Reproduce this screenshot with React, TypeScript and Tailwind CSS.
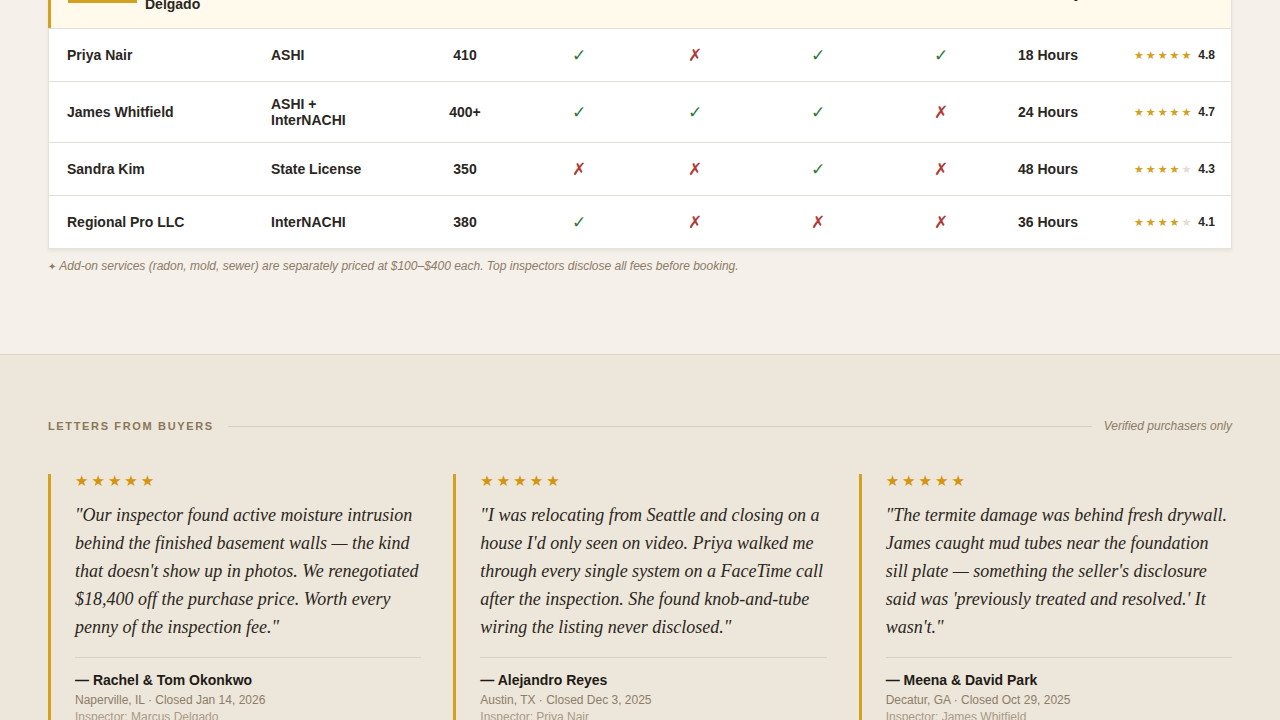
import React from 'react';

type Mark = boolean;

interface Inspector {
  name: string;
  cert: string;
  count: string;
  marks: Mark[];
  turnaround: string;
  rating: number;
  stars: number;
}

const inspectors: Inspector[] = [
  { name: 'Priya Nair', cert: 'ASHI', count: '410', marks: [true, false, true, true], turnaround: '18 Hours', rating: 4.8, stars: 5 },
  { name: 'James Whitfield', cert: 'ASHI + InterNACHI', count: '400+', marks: [true, true, true, false], turnaround: '24 Hours', rating: 4.7, stars: 5 },
  { name: 'Sandra Kim', cert: 'State License', count: '350', marks: [false, false, true, false], turnaround: '48 Hours', rating: 4.3, stars: 4 },
  { name: 'Regional Pro LLC', cert: 'InterNACHI', count: '380', marks: [true, false, false, false], turnaround: '36 Hours', rating: 4.1, stars: 4 },
];

const letters = [
  {
    quote:
      '"Our inspector found active moisture intrusion behind the finished basement walls — the kind that doesn\'t show up in photos. We renegotiated $18,400 off the purchase price. Worth every penny of the inspection fee."',
    name: '— Rachel & Tom Okonkwo',
    meta: 'Naperville, IL · Closed Jan 14, 2026',
    inspector: 'Inspector: Marcus Delgado',
  },
  {
    quote:
      '"I was relocating from Seattle and closing on a house I\'d only seen on video. Priya walked me through every single system on a FaceTime call after the inspection. She found knob-and-tube wiring the listing never disclosed."',
    name: '— Alejandro Reyes',
    meta: 'Austin, TX · Closed Dec 3, 2025',
    inspector: 'Inspector: Priya Nair',
  },
  {
    quote:
      '"The termite damage was behind fresh drywall. James caught mud tubes near the foundation sill plate — something the seller\'s disclosure said was \'previously treated and resolved.\' It wasn\'t."',
    name: '— Meena & David Park',
    meta: 'Decatur, GA · Closed Oct 29, 2025',
    inspector: 'Inspector: James Whitfield',
  },
];

const grid = 'grid grid-cols-[204px_150px_124px_104px_128px_118px_128px_86px_140px]';

function MarkCell({ ok }: { ok: Mark }) {
  return (
    <div className="flex items-center justify-center">
      {ok ? (
        <span className="font-['DejaVu_Sans',sans-serif] text-[17px] leading-6 font-bold text-[#2f7a3a]">✓</span>
      ) : (
        <span className="font-['DejaVu_Sans',sans-serif] text-[17px] leading-6 font-bold text-[#b03a34]">✗</span>
      )}
    </div>
  );
}

function RatingStars({ filled, value }: { filled: number; value: number }) {
  return (
    <div className="flex items-center justify-end pr-4">
      <div className="flex gap-[2px] font-['DejaVu_Sans',sans-serif] text-[11px] leading-none">
        {[0, 1, 2, 3, 4].map((i) => (
          <span key={i} className={i < filled ? 'text-[#d4a020]' : 'text-[#e2ddd5]'}>★</span>
        ))}
      </div>
      <span className="ml-[7px] text-[12px] font-bold text-[#2a2622]">{value.toFixed(1)}</span>
    </div>
  );
}

export default function App() {
  return (
    <div className="min-h-[720px] font-['Liberation_Sans',Arial,sans-serif] text-[#2a2622] bg-[#ede6da]">
      {/* comparison table (scrolled) */}
      <section className="bg-[#f5f0ea] px-12 pb-[79px]">
        <div className="-mt-[68px] bg-white border border-[#e6e1d9] shadow-[0_2px_3px_rgba(60,45,20,0.08)]">
          {/* highlighted row */}
          <div className={`${grid} h-[96px] bg-[#fffaec] border-b border-[#e4dfd6]`}>
            <div className="self-end flex items-end gap-2 pl-[17px] pb-[16px] border-l-[3px] border-[#d4a020] -ml-px">
              <div className="mb-[9px] h-[20px] w-[69px] shrink-0 bg-[#d4a020] text-white text-[9px] font-bold tracking-wider flex items-center justify-center">
                TOP PICK
              </div>
              <p className="text-[14px] font-bold leading-4 w-[90px]">Marcus Delgado</p>
            </div>
            <div className="self-center pl-[18px] text-[14px] font-bold">ASHI</div>
            <div className="self-center text-center text-[14px] font-bold">520</div>
            <div className="self-center"><MarkCell ok={true} /></div>
            <div className="self-center"><MarkCell ok={true} /></div>
            <div className="self-center"><MarkCell ok={true} /></div>
            <div className="self-center"><MarkCell ok={true} /></div>
            <div className="self-end pb-[27px] text-center text-[14px] font-bold leading-4">Same Day</div>
            <div className="self-center"><RatingStars filled={5} value={4.9} /></div>
          </div>

          {inspectors.map((row, idx) => (
            <div
              key={row.name}
              className={`${grid} items-center py-[14px] ${idx < inspectors.length - 1 ? 'border-b border-[#e4dfd6]' : ''}`}
            >
              <div className="pl-[18px] text-[14px] font-bold leading-4">{row.name}</div>
              <div className="px-[18px] text-[14px] font-bold leading-4">{row.cert}</div>
              <div className="text-center text-[14px] font-bold">{row.count}</div>
              {row.marks.map((m, i) => (
                <MarkCell key={i} ok={m} />
              ))}
              <div className="text-center text-[14px] font-bold">{row.turnaround}</div>
              <RatingStars filled={row.stars} value={row.rating} />
            </div>
          ))}
        </div>
        <p className="mt-[8px] text-[12px] italic text-[#8c7b66]">
          <span className="not-italic font-['DejaVu_Sans',sans-serif] text-[10px]">✦</span> Add-on services (radon, mold, sewer) are separately priced at $100–$400 each. Top inspectors disclose all fees before booking.
        </p>
      </section>

      {/* letters */}
      <section className="border-t border-[#ddd4c5] bg-[#ede6da] px-12 pt-[62px] pb-10">
        <div className="flex items-center">
          <h2 className="text-[11px] font-bold uppercase tracking-[0.15em] text-[#8a7659]">Letters from Buyers</h2>
          <div className="ml-[14px] mr-3 h-px flex-1 bg-[#d5ccbd]" />
          <span className="text-[12px] italic text-[#8c7b66]">Verified purchasers only</span>
        </div>

        <div className="mt-[39px] grid grid-cols-3 gap-8">
          {letters.map((l) => (
            <article key={l.name} className="border-l-[3px] border-[#d4a020] pl-6">
              <div className="flex gap-[3px] font-['DejaVu_Sans',sans-serif] text-[15px] leading-[15px] text-[#d4940e]">
                <span>★</span><span>★</span><span>★</span><span>★</span><span>★</span>
              </div>
              <blockquote className="mt-[12px] font-['Liberation_Serif','Times_New_Roman',serif] italic text-[18px] leading-[28px] text-[#2b2621]">
                {l.quote}
              </blockquote>
              <div className="mt-4 border-t border-[#d9d1c3] pt-[14px]">
                <p className="text-[14px] font-bold leading-[17px] text-[#1f1b17]">{l.name}</p>
                <p className="mt-[4px] text-[12px] leading-[14px] text-[#8c7d69]">{l.meta}</p>
                <p className="mt-[3px] text-[12px] leading-[14px] text-[#a89a86]">{l.inspector}</p>
              </div>
            </article>
          ))}
        </div>
      </section>
    </div>
  );
}
